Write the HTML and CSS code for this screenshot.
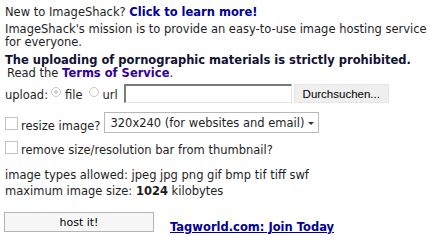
FILE: index.html
```html
<!DOCTYPE html>
<html>
<head>
<meta charset="utf-8">
<link rel="stylesheet" href="styles.css">
</head>
<body>
<div class="page">
  <p class="intro">New to ImageShack? <a class="learn" href="#">Click to learn more!</a></p>
  <p class="mission">ImageShack's mission is to provide an easy-to-use image hosting service<br>for everyone.</p>
  <p class="warn">The uploading of pornographic materials is strictly prohibited.</p>
  <p class="tos">Read the <a class="tos-link" href="#">Terms of Service</a>.</p>

  <div class="row upload-row">
    <span class="label">upload:</span>
    <span class="radio checked"></span><span class="rlabel">file</span>
    <span class="radio"></span><span class="rlabel">url</span>
    <span class="field"></span>
    <span class="browse">Durchsuchen...</span>
  </div>

  <div class="row resize-row">
    <span class="check"></span>
    <span class="clabel">resize image?</span>
    <span class="select"><span class="opt">320x240 (for websites and email)</span><span class="arrow"></span></span>
  </div>

  <div class="row remove-row">
    <span class="check"></span>
    <span class="clabel">remove size/resolution bar from thumbnail?</span>
  </div>

  <p class="info first">image types allowed: jpeg jpg png gif bmp tif tiff swf</p>
  <p class="info">maximum image size: <b>1024</b> kilobytes</p>

  <div class="row submit-row">
    <span class="host">host it!</span>
    <a class="tagworld" href="#">Tagworld.com: Join Today</a>
  </div>
</div>
</body>
</html>
```
FILE: styles.css
```css
html, body {
  margin: 0;
  padding: 0;
  background: #fff;
}
body {
  font-family: Verdana, "DejaVu Sans", sans-serif;
  font-size: 11.5px;
  color: #1e1e1e;
}
.page {
  padding: 6px 0 0 5px;
}
p {
  margin: 0;
  white-space: nowrap;
}
a {
  text-decoration: none;
}
.intro {
  line-height: 13px;
}
.learn {
  color: #000099;
  font-weight: bold;
}
.mission {
  margin-top: 4px;
  line-height: 13px;
}
.warn {
  margin-top: 5px;
  line-height: 13px;
  font-weight: bold;
  color: #111133;
}
.tos {
  padding-left: 2px;
  line-height: 13px;
}
.tos-link {
  color: #330099;
  font-weight: bold;
}
.row {
  display: flex;
}
.upload-row {
  margin-top: 4px;
  height: 19px;
  align-items: center;
}
.label, .rlabel {
  line-height: 14px;
  padding-top: 3px;
}
.label {
  margin-right: 3px;
}
.radio {
  width: 10px;
  height: 10px;
  border: 1px solid #c8c8c8;
  border-radius: 50%;
  box-sizing: border-box;
  margin: 0 4px 3px 0;
  background: #fff;
  position: relative;
}
.radio.checked::after {
  content: "";
  position: absolute;
  left: 2px;
  top: 2px;
  width: 4px;
  height: 4px;
  border-radius: 50%;
  background: #d0d0d0;
}
.rlabel {
  margin-right: 6px;
}
.field {
  width: 168px;
  height: 19px;
  box-sizing: border-box;
  border-top: 2px solid #7a7a7a;
  border-left: 2px solid #7a7a7a;
  border-right: 1px solid #e4e4e4;
  border-bottom: 1px solid #e4e4e4;
  background: #fff;
}
.browse {
  width: 95px;
  height: 19px;
  box-sizing: border-box;
  margin-left: 2px;
  background: #efefef;
  border: 1px solid #e6e6e6;
  font-family: "Liberation Sans", Arial, sans-serif;
  font-size: 11.5px;
  display: flex;
  align-items: center;
  justify-content: center;
  color: #000;
}
.resize-row {
  margin-top: 9px;
  height: 21px;
  align-items: flex-start;
}
.check {
  width: 13px;
  height: 13px;
  box-sizing: border-box;
  border: 1px solid #c4c4c4;
  background: #fff;
  flex: none;
}
.resize-row .check {
  margin-top: 5px;
}
.clabel {
  margin-left: 3px;
  line-height: 14px;
}
.resize-row .clabel {
  margin-top: 7px;
}
.select {
  margin-left: 4px;
  width: 215px;
  height: 21px;
  box-sizing: border-box;
  border: 1px solid #b8b8b8;
  background: #fff;
  display: flex;
  align-items: center;
  padding-left: 5px;
  color: #1e1e1e;
  white-space: nowrap;
}
.opt {
  line-height: 14px;
}
.arrow {
  margin-left: 4px;
  width: 0;
  height: 0;
  border-left: 3px solid transparent;
  border-right: 3px solid transparent;
  border-top: 3px solid #333;
  margin-top: 2px;
}
.remove-row {
  margin-top: 8px;
  height: 15px;
}
.remove-row .clabel {
  margin-top: 2px;
}
.info {
  line-height: 16px;
}
.info.first {
  margin-top: 11px;
}
.submit-row {
  margin-top: 13px;
  align-items: flex-start;
}
.host {
  width: 150px;
  height: 20px;
  box-sizing: border-box;
  border: 1px solid #b4b4b4;
  background: #f7f7f7;
  display: flex;
  align-items: center;
  justify-content: center;
  color: #000;
  font-size: 11px;
  margin-left: -1px;
}
.tagworld {
  margin-left: 16px;
  margin-top: 8px;
  color: #000099;
  font-weight: bold;
  text-decoration: underline;
  line-height: 14px;
}
```
